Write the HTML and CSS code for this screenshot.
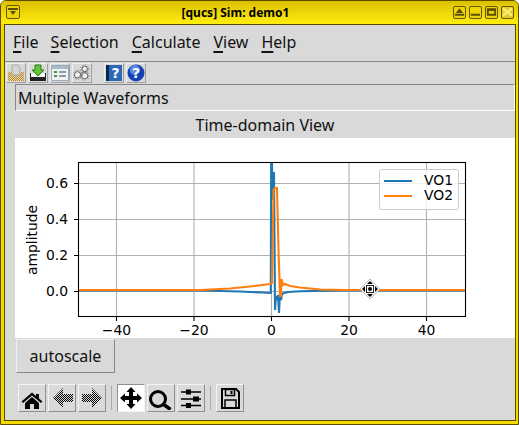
FILE: index.html
```html
<!DOCTYPE html>
<html lang="en">

<head>
    <meta charset="UTF-8">
    <title>[qucs] Sim: demo1</title>
    <link rel="stylesheet" href="styles.css">
</head>

<body>
    <div class="window">
        <!-- title bar -->
        <div class="titlebar">
            <span class="wm-btn wm-menu"><svg width="12" height="10" viewBox="0 0 12 10"><path d="M1 1h10v2H1zM3 4h6L6 8z" fill="#5c4c00"/></svg></span>
            <span class="title">[qucs] Sim: demo1</span>
            <span class="wm-btn"><svg width="11" height="10" viewBox="0 0 12 10"><path d="M6 1l4 5H2zM1 7h10v2H1z" fill="#5c4c00"/></svg></span>
            <span class="wm-btn"><svg width="11" height="10" viewBox="0 0 12 10"><path d="M1 7h10v2H1z" fill="#5c4c00"/></svg></span>
            <span class="wm-btn"><svg width="11" height="10" viewBox="0 0 12 10"><path d="M1 1h10v8H1z M3 4v3h6V4z" fill="#5c4c00" fill-rule="evenodd"/></svg></span>
            <span class="wm-btn wm-close"><svg width="11" height="10" viewBox="0 0 12 10"><path d="M1 1l10 8M11 1L1 9" stroke="#f8ee80" stroke-width="2.4"/></svg></span>
        </div>

        <div class="content">
            <!-- menu -->
            <div class="menubar">
                <span><u>F</u>ile</span>
                <span class="menu-sel"><u>S</u>election</span>
                <span><u>C</u>alculate</span>
                <span><u>V</u>iew</span>
                <span><u>H</u>elp</span>
            </div>

            <!-- top icons -->
            <div class="toolbar">
                <span class="tool"><svg width="18" height="18" viewBox="0 0 18 18">
                        <defs><pattern id="tan" width="2" height="2" patternUnits="userSpaceOnUse"><rect width="2" height="2" fill="#e8d8a8"/><rect width="1" height="1" fill="#b88a30"/><rect x="1" y="1" width="1" height="1" fill="#b88a30"/></pattern></defs>
                        <path d="M1 8h16v9H1z" fill="url(#tan)"/>
                        <path d="M5 1h6l2 3v7H5z" fill="#d4d4d4" stroke="#a8a8a8"/>
                    </svg></span>
                <span class="tool"><svg width="18" height="18" viewBox="0 0 18 18">
                        <path d="M1 9h16v8H1z" fill="#222"/>
                        <path d="M2 9h14v4H2z" fill="#f2f2f2"/>
                        <path d="M6 1h6v5h3l-6 6-6-6h3z" fill="#62c23a" stroke="#2c7a18"/>
                    </svg></span>
                <span class="tool"><svg width="18" height="18" viewBox="0 0 18 18">
                        <path d="M.5 1.500h17v15H.5z" fill="#eef2f4" stroke="#9ab"/>
                        <path d="M1 2h16v3H1z" fill="#a9bcc6"/>
                        <path d="M3 7h3v2H3zM3 11h3v2H3z" fill="#3c9a3c"/>
                        <path d="M8 8h7M8 12h7" stroke="#345" stroke-width="1"/>
                    </svg></span>
                <span class="tool"><svg width="20" height="18" viewBox="0 0 20 18">
                        <g fill="#eee" stroke="#555">
                            <circle cx="13" cy="4.500" r="3"/>
                            <circle cx="5" cy="11" r="3.500"/>
                            <circle cx="13" cy="12" r="3.500"/>
                        </g>
                        <g fill="none" stroke="#555" stroke-dasharray="1 2">
                            <circle cx="13" cy="4.500" r="4.500"/>
                            <circle cx="5" cy="11" r="5"/>
                            <circle cx="13" cy="12" r="5"/>
                        </g>
                    </svg></span>
                <span class="tool-gap"></span>
                <span class="tool"><svg width="18" height="18" viewBox="0 0 18 18">
                        <path d="M1 1h3v16H1z" fill="#10284c"/>
                        <path d="M4 1h13v16H4z" fill="#2c68b8"/>
                        <text x="10.500" y="14" class="icon-q">?</text>
                    </svg></span>
                <span class="tool"><svg width="18" height="18" viewBox="0 0 18 18">
                        <circle cx="9" cy="9" r="8.500" fill="#1440b8"/>
                        <circle cx="8" cy="6" r="5" fill="#5a88e0"/>
                        <text x="9" y="14" class="icon-q">?</text>
                    </svg></span>
            </div>

            <div class="group-title">Multiple Waveforms</div>
            <div class="plot-title">Time-domain View</div>

            <!-- plot, the same coordinates as the window minus the 15,138 corner -->
            <div class="plot">
                <svg class="chart" width="500" height="200" viewBox="15 138 500 200">
                    <defs><clipPath id="axes"><rect x="78" y="162" width="387" height="155"/></clipPath></defs>
                    <g class="grid">
                        <path d="M116.500 162V317M194 162V317M271.500 162V317M349 162V317M426.500 162V317"/>
                        <path d="M78 183.500H465M78 219.500H465M78 255.500H465M78 291.500H465"/>
                    </g>
                    <g clip-path="url(#axes)">
                        <path class="line-blue" d="M78 290.500H200L240 291.500L262 292.500L270.800 293L271.200 150L271.800 150L272.500 200L274 172L275 310L276 296L277 300L278 295L279 313L280 293L281 300L282 294L284 293L288 292L300 291.300L340 290.500H465"/>
                        <path class="line-orange" d="M78 290H200L230 288.500L250 286.500L270 284L272 283L273.500 190L275 188L277 188L278.500 250L280 296L281 296L281.500 279L283 285L285 284L290 286L300 287.500L320 289.500L345 290H465"/>
                    </g>
                    <rect class="frame" x="78.500" y="162.500" width="387" height="154"/>
                    <path class="tick" d="M116.500 317v4M194 317v4M271.500 317v4M349 317v4M426.500 317v4M78 183.500h-4M78 219.500h-4M78 255.500h-4M78 291.500h-4"/>
                    <text class="lab" x="116.500" y="335">−40</text>
                    <text class="lab" x="194" y="335">−20</text>
                    <text class="lab" x="271.500" y="335">0</text>
                    <text class="lab" x="349" y="335">20</text>
                    <text class="lab" x="426.500" y="335">40</text>
                    <text class="lab-y" x="68" y="188">0.6</text>
                    <text class="lab-y" x="68" y="224">0.4</text>
                    <text class="lab-y" x="68" y="260">0.2</text>
                    <text class="lab-y" x="68" y="296">0.0</text>
                    <text class="lab" transform="translate(37 240) rotate(-90)">amplitude</text>
                    <rect class="legend" x="379.500" y="169.500" width="79" height="40" rx="2"/>
                    <path class="line-blue" d="M384 181h28"/>
                    <path class="line-orange" d="M384 196h28"/>
                    <text class="lab-l" x="424" y="185">VO1</text>
                    <text class="lab-l" x="424" y="200">VO2</text>
                    <!-- mouse cursor -->
                    <path d="M370 279l10 10-10 10-10-10z" fill="#fff" stroke="#bbb"/>
                    <path d="M370 281l3 3h-6zM370 297l3-3h-6zM362 289l3-3v6zM378 289l-3-3v6z" fill="#000"/>
                    <rect x="366.500" y="285.500" width="7" height="7" fill="#fff" stroke="#222"/>
                    <circle cx="370" cy="289" r="2" fill="#000"/>
                </svg>
            </div>

            <div class="button-row">
                <button class="autoscale">autoscale</button>
            </div>

            <!-- matplotlib toolbar -->
            <div class="navbar">
                <span class="nav"><svg width="24" height="24" viewBox="0 0 24 24">
                        <path d="M12 6.500L1.500 15.500L3 17L12 9.500L21 17L22.500 15.500L19 12.500V8h-3v2z" fill="#000"/>
                        <path d="M5 17L12 11l7 6v6h-5v-5h-4v5H5z" fill="#000"/>
                    </svg></span>
                <span class="nav"><svg width="24" height="24" viewBox="0 0 24 24">
                        <defs><pattern id="dither" width="2" height="2" patternUnits="userSpaceOnUse"><rect width="1" height="1" fill="#000"/><rect x="1" y="1" width="1" height="1" fill="#000"/></pattern></defs>
                        <path d="M3 12L13 2v6h10v8H13v6z" fill="url(#dither)"/>
                    </svg></span>
                <span class="nav"><svg width="24" height="24" viewBox="0 0 24 24">
                        <path d="M22 12L12 2v6H2v8h10v6z" fill="url(#dither)"/>
                    </svg></span>
                <span class="nav-sep"></span>
                <span class="nav nav-on"><svg width="24" height="24" viewBox="0 0 24 24">
                        <path d="M12 1l4.500 5H14v4h4V7.500l5 4.500-5 4.500V14h-4v4h2.500L12 23l-4.500-5H10v-4H6v2.500L1 12l5-4.500V10h4V6H7.500z" fill="#000"/>
                    </svg></span>
                <span class="nav"><svg width="24" height="24" viewBox="0 0 24 24">
                        <circle cx="9" cy="13" r="7.500" fill="none" stroke="#000" stroke-width="3"/>
                        <path d="M14 18l7.500 5.500" stroke="#000" stroke-width="3.500"/>
                    </svg></span>
                <span class="nav"><svg width="24" height="24" viewBox="0 0 24 24">
                        <path d="M2 6h20M2 13h20M2 19.500h20" stroke="#000" stroke-width="1.500"/>
                        <path d="M7 3.500h5v5H7zM14 10.500h6v5h-6zM7 17h5v5H7z" fill="#000"/>
                    </svg></span>
                <span class="nav-sep"></span>
                <span class="nav"><svg width="24" height="24" viewBox="0 0 24 24">
                        <path d="M4 3h14l3 3v16H4z" fill="none" stroke="#000" stroke-width="2"/>
                        <path d="M7.500 3.500h9v6h-9z" fill="none" stroke="#000" stroke-width="1.500"/>
                        <path d="M12.500 5h2v3h-2z" fill="#000"/>
                        <path d="M7 14h11v8H7z" fill="none" stroke="#000" stroke-width="1.500"/>
                    </svg></span>
            </div>
        </div>
    </div>
</body>

</html>
```

FILE: styles.css
```css
body {
    margin: 0;
    background-color: #fff;
    font-family: "Noto Sans", sans-serif;
    color: #111;
}

.window {
    width: 519px;
    height: 425px;
    box-sizing: border-box;
    display: flex;
    flex-direction: column;
    background-color: #f2dc00;
    border: 1px solid #5c4c00;
    border-radius: 6px 6px 0 0;
    padding: 0 2px 3px 3px;
    overflow: hidden;
}

/* title bar */
.titlebar {
    height: 23px;
    flex: none;
    display: flex;
    align-items: center;
    gap: 3px;
    margin: 0 -2px 0 -3px;
    padding: 0 4px 1px 5px;
    box-sizing: border-box;
    background: linear-gradient(#dcc000, #ffee10);
}

.title {
    flex: 1;
    text-align: center;
    padding-right: 2px;
    font-family: "Noto Sans", sans-serif;
    font-weight: bold;
    font-size: 12px;
    color: #000;
}

.wm-btn {
    width: 13px;
    height: 13px;
    box-sizing: border-box;
    display: flex;
    align-items: center;
    justify-content: center;
    border: 1px solid #6a5800;
    border-radius: 2px;
    background-color: #eed400;
}

.wm-menu {
    width: 14px;
    height: 14px;
}

.wm-close {
    background-color: #e4cc20;
}

.content {
    flex: 1;
    display: flex;
    flex-direction: column;
    background-color: #d9d9d9;
    border: 1px solid #5c4c00;
    min-height: 0;
}

.menubar {
    height: 37px;
    flex: none;
    box-sizing: border-box;
    display: flex;
    align-items: center;
    gap: 13px;
    padding: 0 0 2px 8px;
    font-size: 16px;
    border-bottom: 1px solid #888;
}

.menubar u {
    text-decoration-thickness: 2px;
    text-underline-offset: 3px;
}

.menu-sel {
    margin-left: -1px;
}

.toolbar {
    height: 22px;
    flex: none;
    display: flex;
    align-items: center;
    gap: 2px;
    padding-left: 1px;
}

.tool {
    width: 20px;
    height: 20px;
    display: flex;
    align-items: center;
    justify-content: center;
    border-top: 1px solid #efefef;
    border-left: 1px solid #efefef;
    border-right: 1px solid #a0a0a0;
    border-bottom: 1px solid #a0a0a0;
    box-sizing: border-box;
}

.tool-gap {
    width: 8px;
}

.group-title {
    height: 27px;
    flex: none;
    box-sizing: border-box;
    margin-left: 10px;
    padding-left: 2px;
    display: flex;
    align-items: center;
    font-size: 16px;
    border-top: 1px solid #888;
    border-left: 1px solid #888;
    border-bottom: 1px solid #fff;
    border-right: 1px solid #fff;
}

.plot-title {
    height: 27px;
    flex: none;
    margin-left: 10px;
    display: flex;
    align-items: center;
    justify-content: center;
    font-size: 16px;
}

.plot {
    height: 200px;
    flex: none;
    margin-left: 10px;
    background-color: #fff;
}

.chart {
    display: block;
}

.grid path {
    fill: none;
    stroke: #b0b0b0;
    stroke-width: 1.100;
}

.line-blue {
    fill: none;
    stroke: #1f77b4;
    stroke-width: 2.100;
}

.line-orange {
    fill: none;
    stroke: #ff7f0e;
    stroke-width: 2.100;
}

.frame {
    fill: none;
    stroke: #000;
    stroke-width: 1.100;
}

.tick {
    fill: none;
    stroke: #000;
    stroke-width: 1.100;
}

.legend {
    fill: #fff;
    fill-opacity: 0.8;
    stroke: #ccc;
}

.lab,
.lab-y,
.lab-l {
    font-family: "DejaVu Sans", sans-serif;
    font-size: 13.900px;
    fill: #000;
}

.lab {
    text-anchor: middle;
}

.lab-y {
    text-anchor: end;
}

.icon-q {
    font-family: "DejaVu Sans", sans-serif;
    font-size: 14px;
    font-weight: bold;
    fill: #fff;
    text-anchor: middle;
}

.button-row {
    height: 46px;
    flex: none;
    padding: 1px 0 0 11px;
    box-sizing: border-box;
}

.autoscale {
    display: block;
    width: 99px;
    height: 34px;
    padding: 0;
    font-family: "Noto Sans", sans-serif;
    font-size: 16px;
    color: #111;
    background-color: #d9d9d9;
    border-top: 1px solid #f0f0f0;
    border-left: 1px solid #f0f0f0;
    border-right: 1px solid #888;
    border-bottom: 1px solid #888;
}

.navbar {
    display: flex;
    align-items: center;
    gap: 2px;
    padding-left: 13px;
}

.nav {
    width: 28px;
    height: 28px;
    box-sizing: border-box;
    display: flex;
    align-items: center;
    justify-content: center;
    border-top: 1px solid #f4f4f4;
    border-left: 1px solid #f4f4f4;
    border-right: 1px solid #909090;
    border-bottom: 1px solid #909090;
}

.nav-on {
    background-color: #fff;
    border-color: #909090 #f4f4f4 #f4f4f4 #909090;
}

.nav-sep {
    width: 1px;
    height: 24px;
    margin: 0 3px;
    background-color: #aaa;
}
```
